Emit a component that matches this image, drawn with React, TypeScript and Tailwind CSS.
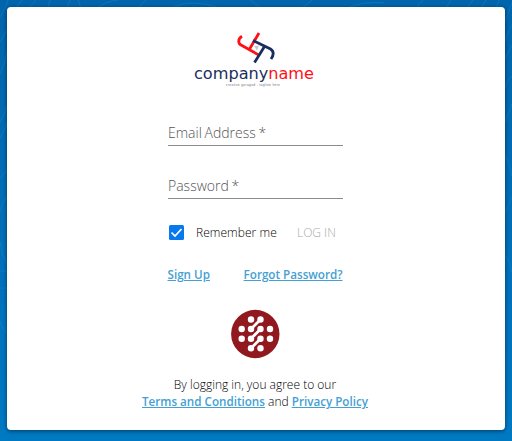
import React from "react";

function Backdrop() {
  return (
    <svg className="absolute inset-0 h-full w-full" viewBox="0 0 512 441" fill="none" stroke="#168ccd" strokeOpacity="0.45" strokeWidth="1">
      <path d="M0 17Q6 9 8 0M15 9L22 0M28 9L36 0M48 8L50 0M67 8L70 0M78 0L81 8M97 8Q106 1 118 0M138 8L146 0M172 8Q190 -2 220 8M250 0L261 8M302 8L312 0M346 8Q365 1 384 3M416 8L423 0M446 8L451 0M467 8L473 0M481 8L486 0M496 8L499 0" />
      <path d="M505 22L512 3M505 42Q509 28 512 25M505 59L512 45M505 88Q508 78 512 76M505 122L512 104M505 155Q509 162 512 176M505 214L512 196M505 255Q509 260 512 273" />
      <path d="M0 42L7 30M0 74Q5 64 7 52M0 122Q5 114 7 105M0 138Q5 130 7 122M0 178L7 170M0 212Q3 200 7 196M0 241Q3 260 7 263M0 271H7M0 288H7M0 321Q3 332 7 332" />
    </svg>
  );
}

function CompanyLogo() {
  return (
    <svg className="block h-[60px] w-[124px] shrink-0" viewBox="192 30 124 60" role="img" aria-label="companyname">
      <g fill="none" strokeWidth="2.8">
        <path d="M241 36.3C236.5 39 237 43.5 240.5 45.3L258 55.1M258 33L248 50" stroke="#ff1018" />
        <path d="M252 40.5L269.5 49C273.5 51.5 272.5 55.5 270 59M263.5 46.5L253.5 62.5" stroke="#182f5d" />
      </g>
      <path d="M253 46L258 45.5L256 50.5Z" fill="#c5c9cf" />
      <text x="193" y="79.3" fontSize="16" textLength="120" lengthAdjust="spacingAndGlyphs" className="font-['DejaVu_Sans',sans-serif]">
        <tspan fill="#182f5d">company</tspan><tspan fill="#ff1018">name</tspan>
      </text>
      <text x="225" y="85.5" fontSize="3.4" textLength="54" fill="#777" className="font-['Liberation_Sans',sans-serif]">creative garaged - tagline here</text>
    </svg>
  );
}

const dots = [
  [251, 319.5], [260.5, 319.5],
  [241.7, 329], [251, 329], [260.5, 329], [270, 329],
  [241.7, 338.7], [251, 338.7], [260.5, 338.7], [270, 338.7],
  [251, 348.3], [260.5, 348.3],
];

function Emblem() {
  return (
    <svg className="block h-[50px] w-[50px]" viewBox="230 309 50 50">
      <circle cx="255.3" cy="334" r="24.2" fill="#92181f" />
      <g fill="#fff">
        {dots.map(([x, y]) => (
          <circle key={`${x}-${y}`} cx={x} cy={y} r="3.2" />
        ))}
      </g>
      <path d="M260.5 319.5L251 329M260.5 329L251 338.7M260.5 338.7L251 348.3" stroke="#fff" strokeWidth="2.8" />
    </svg>
  );
}

function Field({ label }: { label: string }) {
  return (
    <label className="flex h-[25px] w-[175px] items-start border-b border-[#8b8b8b] pl-[0.5px] text-[14px] font-light leading-[24px] text-[#555] [word-spacing:-1px]">
      {label} *
    </label>
  );
}

const link = "text-[11.65px] font-semibold text-[#449fd3] underline";

export default function App() {
  return (
    <main className="relative h-[441px] w-[512px] overflow-hidden bg-linear-to-b from-[#0065ad] to-[#0079c3] pt-[7px] pl-[7px] font-['Open_Sans',sans-serif]">
      <Backdrop />
      <section className="relative flex h-[422.5px] w-[497.5px] flex-col items-center rounded-[4px] bg-white pt-[23px] pr-[1.5px] shadow-[0_1px_4px_rgba(0,0,0,0.5)]">
        <CompanyLogo />
        <form className="mt-[31px] flex w-[175px] flex-col">
          <Field label="Email Address" />
          <div className="mt-[28px]"><Field label="Password" /></div>
          <div className="mt-[24px] flex h-[20px] items-center whitespace-nowrap text-[12px]">
            <svg className="ml-px h-[15px] w-[15px] shrink-0 -translate-y-px" viewBox="0 0 15 15">
              <rect width="15" height="15" rx="1.5" fill="#0878ed" />
              <path d="M2.5 7.5L6 11L12.5 4" fill="none" stroke="white" strokeWidth="1.7" />
            </svg>
            <span className="ml-[12.5px] w-[101px] font-light tracking-[0.05px] text-black">Remember me</span>
            <span className="font-light text-[#aaa]">LOG IN</span>
          </div>
          <div className="mt-[22px] flex h-[20px] items-center justify-between whitespace-nowrap text-[12px]">
            <a className={link}>Sign Up</a>
            <a className={link}>Forgot Password?</a>
          </div>
        </form>
        <div className="mt-[24px]"><Emblem /></div>
        <p className="mt-[17px] text-center text-[12px] font-light leading-[17px] whitespace-nowrap text-black">
          By logging in, you agree to our<br />
          <a className={link}>Terms and Conditions</a> and <a className={link}>Privacy Policy</a>
        </p>
      </section>
    </main>
  );
}
